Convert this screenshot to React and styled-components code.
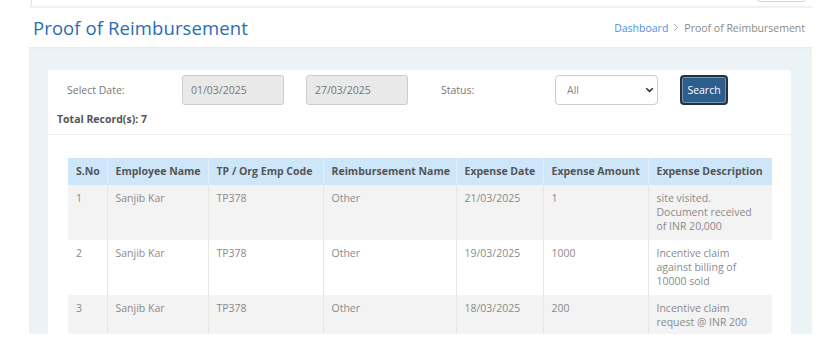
import React from "react";
import styled, { createGlobalStyle } from "styled-components";

const GlobalStyle = createGlobalStyle`
  html, body { margin: 0; padding: 0; background: #fff; }
  body { font-family: "Open Sans", "Noto Sans", Arial, sans-serif; }
  * { box-sizing: border-box; }
`;

const Page = styled.div`
  width: 824px;
  height: 352px;
  background: #fff;
  overflow: hidden;
`;

const Main = styled.div`
  margin-left: 29px;
  width: 783px;
  height: 334px;
  overflow: hidden;
  display: flex;
  flex-direction: column;
`;

const TopBar = styled.div`
  height: 8px;
  flex: none;
  display: flex;
  justify-content: space-between;
  align-items: flex-start;
  border-bottom: 2px solid #f1f1f1;
  overflow: hidden;
`;

const TopRule = styled.div`
  width: 1px;
  height: 6px;
  margin-left: 2px;
  background: #e4e4e4;
`;

const TopButton = styled.div`
  width: 53px;
  height: 20px;
  margin-top: -18px;
  margin-right: 4px;
  border: 1px solid #d4d4d4;
  border-radius: 6px;
`;

const Header = styled.div`
  height: 39px;
  flex: none;
  display: flex;
  align-items: center;
  justify-content: space-between;
  padding: 0 7px 0 4px;
  background: #fff;
  box-shadow: 0 1px 2px rgba(0, 0, 0, 0.05);
  position: relative;
  z-index: 1;
`;

const Title = styled.h1`
  margin: 0;
  font-size: 18.5px;
  font-weight: 400;
  color: #2a6db5;
  letter-spacing: 0.1px;
`;

const Crumbs = styled.div`
  display: flex;
  align-items: center;
  gap: 5px;
  font-size: 10.5px;
  color: #8a8a8a;
`;

const CrumbLink = styled.span`
  color: #4a90e2;
`;

const Content = styled.div`
  flex: 1;
  background: #ecf3f7;
  padding: 23px 21px 0 19px;
  display: flex;
  flex-direction: column;
`;

const Card = styled.div`
  flex: 1;
  background: #fff;
`;

const Filters = styled.div`
  padding: 5px 0 5px 9px;
  border-bottom: 1px solid #f0f0f0;
`;

const FilterRow = styled.div`
  display: flex;
  align-items: center;
  height: 30px;
`;

const Label = styled.span`
  width: ${(p) => p.$w}px;
  padding-left: ${(p) => p.$pl || 0}px;
  font-size: 10.5px;
  color: #777;
  flex: none;
`;

const DateBox = styled.div`
  width: 102px;
  height: 30px;
  flex: none;
  margin-right: ${(p) => p.$mr || 0}px;
  background: #e9e9e9;
  border: 1px solid #cdcdcd;
  border-radius: 3px;
  padding-left: 8px;
  display: flex;
  align-items: center;
  font-size: 10.5px;
  color: #777;
`;

const SelectWrap = styled.div`
  position: relative;
  width: 103px;
  height: 30px;
  flex: none;
  margin-right: 22px;
`;

const Select = styled.select`
  width: 100%;
  height: 100%;
  appearance: none;
  background: #fff;
  border: 1px solid #cdcdcd;
  border-radius: 4px;
  padding-left: 11px;
  font-family: inherit;
  font-size: 10.5px;
  color: #888;
`;

const Chevron = styled.svg`
  position: absolute;
  right: 4px;
  top: 12px;
  pointer-events: none;
`;

const SearchButton = styled.button`
  width: 48px;
  height: 30px;
  flex: none;
  background: #2c5e8e;
  border: 2px solid #253341;
  box-shadow: inset 0 0 0 1px #7893ad;
  border-radius: 4px;
  color: #fff;
  font-family: inherit;
  font-size: 10.5px;
  padding: 0;
`;

const Total = styled.div`
  margin-top: 7px;
  height: 17px;
  font-size: 10.5px;
  font-weight: 700;
  color: #555;
`;

const TableArea = styled.div`
  padding: 23px 19px 0 20px;
`;

const Table = styled.table`
  width: 704px;
  border-collapse: collapse;
  table-layout: fixed;
  font-size: 10.5px;
`;

const Th = styled.th`
  background: #cde6fa;
  color: #555;
  font-weight: 700;
  text-align: left;
  padding: 6px 0 6px 8px;
  line-height: 15px;
  white-space: nowrap;
  border-left: 1px solid #e2eef8;
  &:first-child { border-left: none; }
`;

const Tr = styled.tr`
  background: ${(p) => (p.$odd ? "#f3f3f3" : "#fff")};
`;

const Td = styled.td`
  vertical-align: top;
  color: #8a8a8a;
  padding: 6px 8px 7px;
  line-height: 14px;
  height: ${(p) => p.$h}px;
  border-left: 1px solid #e6e6e6;
  &:first-child { border-left: none; }
`;

const cols = [39, 101, 115, 133, 87, 105, 124];
const heads = [
  "S.No",
  "Employee Name",
  "TP / Org Emp Code",
  "Reimbursement Name",
  "Expense Date",
  "Expense Amount",
  "Expense Description",
];
const rows = [
  ["1", "Sanjib Kar", "TP378", "Other", "21/03/2025", "1", "site visited. Document received of INR 20,000", 55],
  ["2", "Sanjib Kar", "TP378", "Other", "19/03/2025", "1000", "Incentive claim against billing of 10000 sold", 54],
  ["3", "Sanjib Kar", "TP378", "Other", "18/03/2025", "200", "Incentive claim request @ INR 200", 54],
];

export default function App() {
  return (
    <Page>
      <GlobalStyle />
      <Main>
        <TopBar>
          <TopRule />
          <TopButton />
        </TopBar>
        <Header>
          <Title>Proof of Reimbursement</Title>
          <Crumbs>
            <CrumbLink>Dashboard</CrumbLink>
            <svg width="6" height="9" viewBox="0 0 6 9">
              <path d="M1 1l3.5 3.5L1 8" fill="none" stroke="#aaa" strokeWidth="1" />
            </svg>
            <span>Proof of Reimbursement</span>
          </Crumbs>
        </Header>
        <Content>
          <Card>
            <Filters>
              <FilterRow>
                <Label $w={125} $pl={10}>Select Date:</Label>
                <DateBox $mr={22}>01/03/2025</DateBox>
                <DateBox $mr={0}>27/03/2025</DateBox>
                <Label $w={147} $pl={33}>Status:</Label>
                <SelectWrap>
                  <Select defaultValue="All">
                    <option>All</option>
                  </Select>
                  <Chevron width="9" height="6" viewBox="0 0 9 6">
                    <path d="M1.2 1.2l3.3 3.2 3.3-3.2" fill="none" stroke="#333" strokeWidth="1.6" />
                  </Chevron>
                </SelectWrap>
                <SearchButton>Search</SearchButton>
              </FilterRow>
              <Total>Total Record(s): 7</Total>
            </Filters>
            <TableArea>
              <Table>
                <colgroup>
                  {cols.map((w, i) => (
                    <col key={i} style={{ width: w }} />
                  ))}
                </colgroup>
                <thead>
                  <tr>
                    {heads.map((h) => (
                      <Th key={h}>{h}</Th>
                    ))}
                  </tr>
                </thead>
                <tbody>
                  {rows.map((r, i) => (
                    <Tr key={i} $odd={i % 2 === 0}>
                      {r.slice(0, 7).map((c, j) => (
                        <Td key={j} $h={r[7]}>{c}</Td>
                      ))}
                    </Tr>
                  ))}
                </tbody>
              </Table>
            </TableArea>
          </Card>
        </Content>
      </Main>
    </Page>
  );
}
